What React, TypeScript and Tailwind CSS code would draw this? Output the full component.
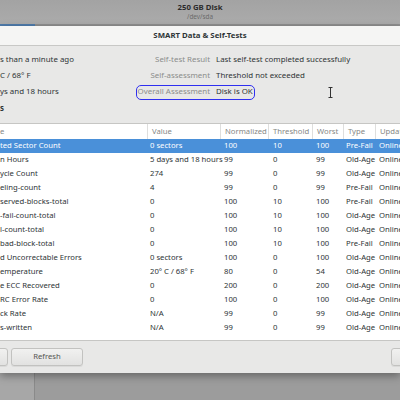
import React from "react";

const rows: string[][] = [
  ["ted Sector Count", "0 sectors", "100", "10", "100", "Pre-Fail"],
  ["n Hours", "5 days and 18 hours", "99", "0", "99", "Old-Age"],
  ["ycle Count", "274", "99", "0", "99", "Old-Age"],
  ["eling-count", "4", "99", "0", "99", "Pre-Fail"],
  ["served-blocks-total", "0", "100", "10", "100", "Pre-Fail"],
  ["-fail-count-total", "0", "100", "10", "100", "Old-Age"],
  ["l-count-total", "0", "100", "10", "100", "Old-Age"],
  ["bad-block-total", "0", "100", "10", "100", "Pre-Fail"],
  ["d Uncorrectable Errors", "0 sectors", "100", "0", "100", "Old-Age"],
  ["emperature", "20° C / 68° F", "80", "0", "54", "Old-Age"],
  ["e ECC Recovered", "0", "200", "0", "200", "Old-Age"],
  ["RC Error Rate", "0", "100", "0", "100", "Old-Age"],
  ["ck Rate", "N/A", "99", "0", "99", "Old-Age"],
  ["s-written", "N/A", "99", "0", "99", "Old-Age"],
];

const headers = ["e", "Value", "Normalized", "Threshold", "Worst", "Type", "Updat"];

const cols = "grid grid-cols-[147px_73px_48px_44px_31px_32px_1fr]";

const Button = ({ label, className }: { label: string; className: string }) => (
  <div
    className={`h-[18px] flex items-center justify-center rounded-[3px] border border-[#c2c2c0] bg-gradient-to-b from-[#f1f1f0] to-[#e2e2e1] text-[#555753] shadow-[0_1px_0_rgba(0,0,0,0.06)] ${className}`}
  >
    {label}
  </div>
);

const App = () => {
  return (
    <div className="w-[400px] h-[400px] overflow-hidden flex flex-col bg-[#9b9b9b] font-['Noto_Sans',sans-serif] text-[7.7px] text-[#2e3436] leading-none">
      {/* Disk header */}
      <div className="h-[24px] shrink-0 flex flex-col items-center justify-center pt-[1px] bg-gradient-to-b from-[#a3a3a3] to-[#ababab]">
        <span className="font-bold text-[7.8px] text-[#2c2c2c]">250 GB Disk</span>
        <span className="mt-[2px] text-[6.4px] text-[#6b6b6b]">/dev/sda</span>
      </div>
      <div className="h-[2px] shrink-0 flex bg-[#8f8f8f]">
        <div className="w-[35px] bg-[#4f7bab]" />
      </div>

      {/* Dialog */}
      <div className="h-[347px] shrink-0 flex flex-col bg-[#e8e8e7] shadow-[0_3px_8px_rgba(0,0,0,0.35)] z-10">
        <div className="h-[20px] shrink-0 flex items-center justify-center bg-[#f5f5f4] border-b border-[#c8c8c6] font-bold text-[7.8px] text-[#2e3436]">
          SMART Data &amp; Self-Tests
        </div>

        {/* Info */}
        <div className="h-[77px] shrink-0 pt-[6px] flex flex-col text-[7.9px]">
          <div className="h-[16px] flex items-center">
            <span className="w-[137px]">s than a minute ago</span>
            <span className="w-[73px] text-right text-[#8b8d8b]">Self-test Result</span>
            <span className="ml-[6px]">Last self-test completed successfully</span>
          </div>
          <div className="h-[16px] flex items-center">
            <span className="w-[137px]">C / 68° F</span>
            <span className="w-[73px] text-right text-[#8b8d8b]">Self-assessment</span>
            <span className="ml-[6px]">Threshold not exceeded</span>
          </div>
          <div className="h-[16px] flex items-center">
            <span className="w-[137px]">ys and 18 hours</span>
            <span className="h-[13px] flex items-center rounded-[4px] outline outline-[1.5px] outline-[#2f2ff0]">
              <span className="w-[73px] text-right text-[#8b8d8b]">Overall Assessment</span>
              <span className="ml-[6px] pr-[1px]">Disk is OK</span>
            </span>
            <span className="ml-[74px] flex items-center">
              <svg width="5" height="11" viewBox="0 0 5 11">
                <path d="M0.5 0.5h4M0.5 10.5h4M2.5 0.5v10" stroke="#333" strokeWidth="1" fill="none" />
              </svg>
            </span>
          </div>
          <div className="h-[16px] mt-[1px] flex items-center font-bold">s</div>
        </div>

        {/* Attributes table */}
        <div className="h-[218px] shrink-0 bg-white border-t border-b border-[#c6c6c4] flex flex-col">
          <div className={`${cols} h-[15px] shrink-0 text-[#858785]`}>
            {headers.map((h, i) => (
              <div
                key={h}
                className={`flex items-center whitespace-nowrap overflow-hidden ${i === 0 ? "pl-0" : "pl-[4px] border-l border-[#dededd]"}`}
              >
                {h}
              </div>
            ))}
          </div>
          {rows.map((r, idx) => (
            <div
              key={r[0]}
              className={`${cols} h-[14px] shrink-0 ${idx === 0 ? "bg-[#4a90d9] text-white" : ""}`}
            >
              <div className="flex items-center whitespace-nowrap overflow-hidden">{r[0]}</div>
              <div className="flex items-center pl-[3px] whitespace-nowrap">{r[1]}</div>
              <div className="flex items-center pl-[4px]">{r[2]}</div>
              <div className="flex items-center pl-[5px]">{r[3]}</div>
              <div className="flex items-center pl-[4px]">{r[4]}</div>
              <div className="flex items-center pl-[3px] whitespace-nowrap">{r[5]}</div>
              <div className="flex items-center pl-[4px]">Online</div>
            </div>
          ))}
        </div>

        {/* Buttons */}
        <div className="flex-1 flex items-start pt-[7px]">
          <Button label="" className="w-[60px] ml-[-52px]" />
          <Button label="Refresh" className="w-[72px] ml-[3px]" />
          <div className="flex-1" />
          <Button label="" className="w-[60px] mr-[-51px]" />
        </div>
      </div>

      {/* Window below */}
      <div className="flex-1 flex">
        <div className="w-[35px] bg-[#a7a7a7] border-r border-[#8a8a8a]" />
        <div className="flex-1 bg-[#9c9c9c]" />
      </div>
    </div>
  );
};

export default App;
